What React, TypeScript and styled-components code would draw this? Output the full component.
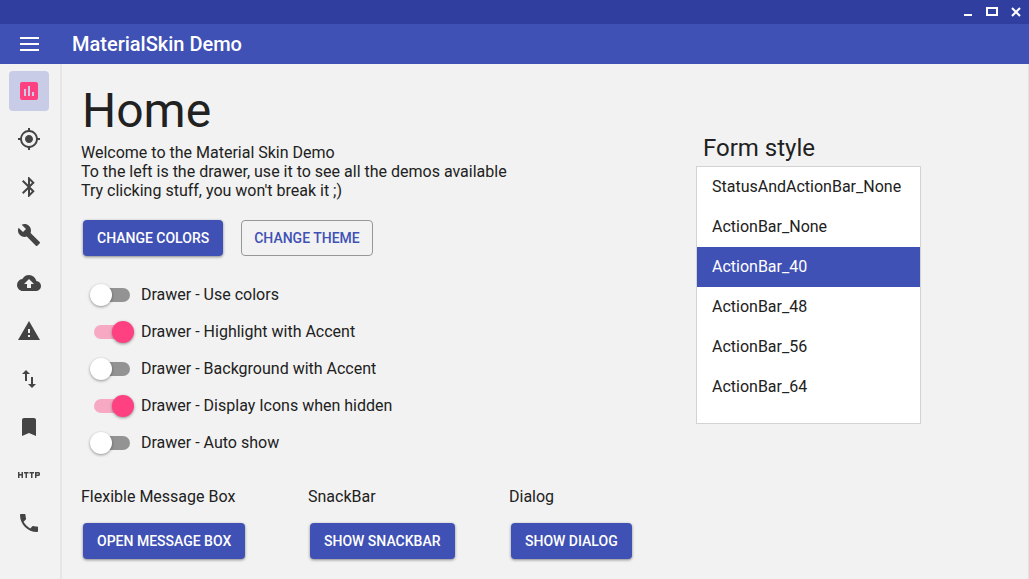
import React, { useState } from 'react';
import styled, { createGlobalStyle } from 'styled-components';
import {
  MdInsertChart,
  MdGpsFixed,
  MdBluetooth,
  MdBuild,
  MdBackup,
  MdWarning,
  MdImportExport,
  MdBookmark,
  MdHttp,
  MdPhone,
} from 'react-icons/md';

const color = {
  primary: '#3f51b5',
  primaryDark: '#303f9f',
  accent: '#ff4081',
  accentTrack: '#f7a9c4',
  surface: '#f2f2f2',
  line: '#e1e1e1',
  text: '#212121',
  icon: '#444444',
  active: '#c9cce6',
};

const GlobalStyle = createGlobalStyle`
  * { box-sizing: border-box; }
  body {
    margin: 0;
    background: ${color.surface};
    color: ${color.text};
    font: 400 16px/19px Roboto, sans-serif;
  }
  h1, h2, p { margin: 0; font-weight: 400; }
  button, select, input { font-family: inherit; margin: 0; }
`;

const Window = styled.div`
  display: flex;
  flex-direction: column;
  min-height: 100vh;
`;

const StatusBar = styled.div`
  display: flex;
  justify-content: flex-end;
  height: 24px;
  padding-right: 1px;
  background: ${color.primaryDark};
`;

const WindowButton = styled.button`
  display: flex;
  align-items: center;
  justify-content: center;
  width: 24px;
  height: 24px;
  padding: 0;
  border: 0;
  background: none;
`;

const ActionBar = styled.header`
  display: flex;
  align-items: center;
  height: 40px;
  background: ${color.primary};
  color: #ffffff;
`;

const MenuButton = styled.button`
  display: flex;
  align-items: center;
  justify-content: center;
  width: 40px;
  height: 40px;
  margin: 0 23px 0 9px;
  padding: 0;
  border: 0;
  background: none;
`;

const AppTitle = styled.div`
  font-size: 20px;
  line-height: 24px;
  font-weight: 500;
`;

const Body = styled.div`
  display: flex;
  flex: 1;
  border-right: 1px solid ${color.line};
`;

const Drawer = styled.nav`
  display: flex;
  flex-direction: column;
  flex: none;
  gap: 8px;
  width: 62px;
  padding: 7px 0 0 9px;
  border-right: 2px solid #e6e6e6;
`;

const DrawerItem = styled.button<{ $active: boolean }>`
  display: flex;
  align-items: center;
  justify-content: center;
  width: 40px;
  height: 40px;
  padding: 0;
  border: 0;
  border-radius: 4px;
  background: ${(p) => (p.$active ? color.active : 'transparent')};
  color: ${(p) => (p.$active ? color.accent : color.icon)};
  font-size: 24px;
`;

const Page = styled.main`
  display: grid;
  grid-template-columns: minmax(0, 1fr) 225px;
  flex: 1;
  padding: 19px 107px 19px 19px;
`;

const Heading = styled.h1`
  padding-left: 1px;
  font-size: 48px;
  line-height: 56px;
`;

const Intro = styled.p`
  margin-top: 4px;
  white-space: pre-line;
`;

const ButtonRow = styled.div`
  display: flex;
  gap: 18px;
  margin: 20px 0 20px 2px;
`;

const Button = styled.button<{ $outlined?: boolean }>`
  height: 36px;
  padding: 0 ${(p) => (p.$outlined ? 12 : 14)}px;
  border: ${(p) => (p.$outlined ? '1px solid #979797' : '0')};
  border-radius: 4px;
  background: ${(p) => (p.$outlined ? 'transparent' : color.primary)};
  color: ${(p) => (p.$outlined ? color.primary : '#ffffff')};
  box-shadow: ${(p) => (p.$outlined ? 'none' : '0 1px 3px rgba(0, 0, 0, 0.45)')};
  font-size: 14px;
  font-weight: 500;
  text-transform: uppercase;
  white-space: nowrap;
`;

const SwitchRow = styled.label`
  display: flex;
  align-items: center;
  gap: 11px;
  height: 37px;
  padding-left: 13px;
`;

const Switch = styled.input`
  position: relative;
  appearance: none;
  width: 36px;
  height: 14px;
  border-radius: 7px;
  background: #939393;

  &::before {
    content: '';
    position: absolute;
    top: -4px;
    left: -4px;
    width: 22px;
    height: 22px;
    border-radius: 50%;
    background: #ffffff;
    box-shadow: 0 1px 3px rgba(0, 0, 0, 0.4);
  }

  &:checked {
    background: ${color.accentTrack};
  }

  &:checked::before {
    left: 18px;
    background: ${color.accent};
  }
`;

const DemoGrid = styled.div`
  display: grid;
  grid-template-columns: 227px 201px auto;
  margin-top: 26px;
`;

const Demo = styled.section`
  display: flex;
  flex-direction: column;
  align-items: flex-start;
  gap: 17px;

  ${Button} {
    margin-left: 2px;
  }
`;

const FormStyle = styled.section`
  padding-top: 51px;
`;

const ListLabel = styled.label`
  display: block;
  margin-bottom: 4px;
  padding-left: 7px;
  font-size: 24px;
  line-height: 28px;
`;

const List = styled.select`
  display: block;
  width: 100%;
  height: 258px;
  padding: 0;
  border: 1px solid #d3d3d3;
  border-radius: 0;
  outline: 0;
  background: #ffffff;
  color: ${color.text};
  font-size: 16px;
  overflow: hidden;

  option {
    min-height: 40px;
    padding: 10px 15px;
    line-height: 20px;
  }

  option:checked {
    background: linear-gradient(${color.primary}, ${color.primary});
    color: #ffffff;
  }
`;

const drawerItems = [
  { name: 'Home', Icon: MdInsertChart },
  { name: 'Location', Icon: MdGpsFixed },
  { name: 'Bluetooth', Icon: MdBluetooth },
  { name: 'Tools', Icon: MdBuild },
  { name: 'Backup', Icon: MdBackup },
  { name: 'Warnings', Icon: MdWarning },
  { name: 'Transfer', Icon: MdImportExport },
  { name: 'Bookmarks', Icon: MdBookmark },
  { name: 'HTTP', Icon: MdHttp },
  { name: 'Phone', Icon: MdPhone },
];

const switches = [
  { label: 'Drawer - Use colors', on: false },
  { label: 'Drawer - Highlight with Accent', on: true },
  { label: 'Drawer - Background with Accent', on: false },
  { label: 'Drawer - Display Icons when hidden', on: true },
  { label: 'Drawer - Auto show', on: false },
];

const demos = [
  { title: 'Flexible Message Box', action: 'Open message box' },
  { title: 'SnackBar', action: 'Show snackbar' },
  { title: 'Dialog', action: 'Show dialog' },
];

const formStyles = [
  'StatusAndActionBar_None',
  'ActionBar_None',
  'ActionBar_40',
  'ActionBar_48',
  'ActionBar_56',
  'ActionBar_64',
];

export default function App() {
  const [page, setPage] = useState('Home');

  return (
    <Window>
      <GlobalStyle />
      <StatusBar>
        <WindowButton aria-label="Minimize">
          <svg width="12" height="12" viewBox="0 0 12 12">
            <path d="M2 9h8" stroke="#fff" strokeWidth="2" />
          </svg>
        </WindowButton>
        <WindowButton aria-label="Maximize">
          <svg width="12" height="12" viewBox="0 0 12 12">
            <path d="M1 2h10v7H1z" fill="none" stroke="#fff" strokeWidth="2" />
          </svg>
        </WindowButton>
        <WindowButton aria-label="Close">
          <svg width="12" height="12" viewBox="0 0 12 12">
            <path d="M2 2l8 8M10 2l-8 8" stroke="#fff" strokeWidth="2" />
          </svg>
        </WindowButton>
      </StatusBar>
      <ActionBar>
        <MenuButton aria-label="Toggle drawer">
          <svg width="20" height="16" viewBox="0 0 20 16">
            <path d="M1 2h19M1 8h19M1 14h19" stroke="#fff" strokeWidth="2" />
          </svg>
        </MenuButton>
        <AppTitle>MaterialSkin Demo</AppTitle>
      </ActionBar>
      <Body>
        <Drawer>
          {drawerItems.map(({ name, Icon }) => (
            <DrawerItem
              key={name}
              aria-label={name}
              $active={page === name}
              onClick={() => setPage(name)}
            >
              <Icon />
            </DrawerItem>
          ))}
        </Drawer>
        <Page>
          <div>
            <Heading>Home</Heading>
            <Intro>
              {'Welcome to the Material Skin Demo\nTo the left is the drawer, use it to see all the demos available\nTry clicking stuff, you won\'t break it ;)'}
            </Intro>
            <ButtonRow>
              <Button>Change colors</Button>
              <Button $outlined>Change theme</Button>
            </ButtonRow>
            {switches.map((s) => (
              <SwitchRow key={s.label}>
                <Switch type="checkbox" role="switch" defaultChecked={s.on} />
                {s.label}
              </SwitchRow>
            ))}
            <DemoGrid>
              {demos.map((d) => (
                <Demo key={d.title}>
                  <p>{d.title}</p>
                  <Button>{d.action}</Button>
                </Demo>
              ))}
            </DemoGrid>
          </div>
          <FormStyle>
            <ListLabel htmlFor="form-style">Form style</ListLabel>
            <List id="form-style" size={6} defaultValue="ActionBar_40">
              {formStyles.map((f) => (
                <option key={f}>{f}</option>
              ))}
            </List>
          </FormStyle>
        </Page>
      </Body>
    </Window>
  );
}
